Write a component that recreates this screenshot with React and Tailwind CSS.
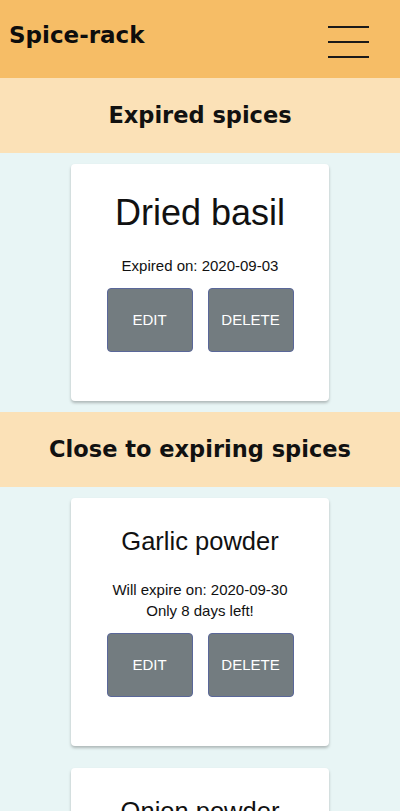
import React from "react";

function Card({ name, titleClass, gapClass, lines }) {
  return (
    <div className="mx-auto my-[11px] w-[258px] rounded-[4px] bg-white pt-[28px] pb-[49px] shadow-[0_2px_3px_rgba(0,0,0,0.25)] text-center text-[#111]" style={{ fontFamily: '"Liberation Sans", Arial, sans-serif' }}>
      <div className={titleClass}>{name}</div>
      <div className={gapClass + " text-[15px] leading-[21px]"}>
        {lines.map((l) => (
          <div key={l}>{l}</div>
        ))}
      </div>
      <div className="mt-[12px] flex justify-center gap-[15px]">
        <button className="h-[64px] w-[86px] rounded-[4px] border border-[#5a6799] bg-[#737c80] text-[15px] text-white">EDIT</button>
        <button className="h-[64px] w-[86px] rounded-[4px] border border-[#5a6799] bg-[#737c80] text-[15px] text-white">DELETE</button>
      </div>
    </div>
  );
}

function Band({ children }) {
  return (
    <div className="flex h-[75px] items-center justify-center bg-[#fbe1b7] text-[22.5px] font-bold text-[#111]" style={{ fontFamily: '"DejaVu Sans", Verdana, sans-serif' }}>
      {children}
    </div>
  );
}

export default function App() {
  return (
    <div className="min-h-[811px] bg-[#e8f5f5]">
      <header className="flex h-[78px] items-center justify-between bg-[#f6bd66] pl-[9px] pr-[31px]">
        <div className="mb-[7px] text-[23px] font-bold text-[#0d0d0d]" style={{ fontFamily: '"DejaVu Sans", Verdana, sans-serif' }}>Spice-rack</div>
        <div className="mt-[5px] flex w-[41px] flex-col gap-[13px]">
          <span className="block h-[2px] bg-[#1a1a1a]" />
          <span className="block h-[2px] bg-[#1a1a1a]" />
          <span className="block h-[2px] bg-[#1a1a1a]" />
        </div>
      </header>
      <Band>Expired spices</Band>
      <div className="flex flex-col">
        <Card name="Dried basil" titleClass="text-[36px] leading-[42px]" gapClass="mt-[21px]" lines={["Expired on: 2020-09-03"]} />
      </div>
      <Band>Close to expiring spices</Band>
      <div className="flex flex-col">
        <Card name="Garlic powder" titleClass="text-[25.5px] leading-[30px]" gapClass="mt-[23px]" lines={["Will expire on: 2020-09-30", "Only 8 days left!"]} />
        <Card name="Onion powder" titleClass="text-[25.5px] leading-[30px]" gapClass="mt-[23px]" lines={["Will expire on: 2020-10-02", "Only 10 days left!"]} />
      </div>
    </div>
  );
}
